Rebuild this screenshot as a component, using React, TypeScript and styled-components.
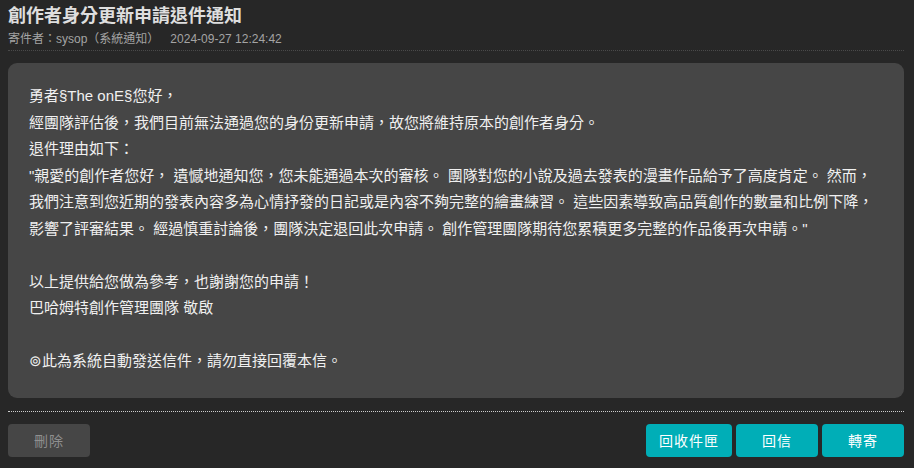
import React from "react";
import styled, { createGlobalStyle } from "styled-components";

const Global = createGlobalStyle`
  html, body { margin: 0; padding: 0; background: #272727; }
  body {
    font-family: "Liberation Sans", Arial, "Noto Sans CJK TC", sans-serif;
    color: #e8e8e8;
  }
`;

const Page = styled.div`
  width: 914px;
  min-height: 468px;
  box-sizing: border-box;
  padding: 5px 10px 10px 8px;
  display: flex;
  flex-direction: column;
`;

const Title = styled.h1`
  margin: 0;
  font-size: 18px;
  line-height: 22px;
  font-weight: bold;
  color: #dedede;
`;

const Meta = styled.div`
  margin-top: 4px;
  font-size: 12px;
  line-height: 16px;
  color: #a4a4a4;
  display: flex;
  gap: 11px;
`;

const Divider = styled.hr<{ $strong?: boolean }>`
  margin: 0;
  border: none;
  border-top: 1px dotted ${(p) => (p.$strong ? "#cfcfcf" : "#4a4a4a")};
  height: 0;
`;

const TopDivider = styled(Divider)`
  margin-top: 3px;
`;

const Card = styled.div`
  margin-top: 12px;
  background: #464646;
  border-radius: 9px;
  padding: 20px 21px 23px 21px;
  font-size: 15px;
  line-height: 26.5px;
  color: #f0f0f0;
`;

const Line = styled.div`
  min-height: 26.5px;
`;

const BottomDivider = styled(Divider)`
  margin-top: 13px;
`;

const Actions = styled.div`
  margin-top: 12px;
  display: flex;
  align-items: center;
  gap: 4px;
`;

const Spacer = styled.div`
  flex: 1;
`;

const Button = styled.button<{ $variant?: "muted" | "primary"; $w: number }>`
  width: ${(p) => p.$w}px;
  height: 33px;
  border: none;
  border-radius: 4px;
  font-family: inherit;
  font-size: 14px;
  cursor: pointer;
  background: ${(p) => (p.$variant === "muted" ? "#464646" : "#00aeb7")};
  color: ${(p) => (p.$variant === "muted" ? "#8f8f8f" : "#ffffff")};
  letter-spacing: 1px;
`;

export default function App() {
  return (
    <>
      <Global />
      <Page>
        <Title>創作者身分更新申請退件通知</Title>
        <Meta>
          <span>寄件者：sysop（系統通知）</span>
          <span>2024-09-27 12:24:42</span>
        </Meta>
        <TopDivider />
        <Card>
          <Line>勇者§The onE§您好，</Line>
          <Line>經團隊評估後，我們目前無法通過您的身份更新申請，故您將維持原本的創作者身分。</Line>
          <Line>退件理由如下：</Line>
          <Line>
            "親愛的創作者您好， 遺憾地通知您，您未能通過本次的審核。 團隊對您的小說及過去發表的漫畫作品給予了高度肯定。 然而，我們注意到您近期的發表內容多為心情抒發的日記或是內容不夠完整的繪畫練習。 這些因素導致高品質創作的數量和比例下降，影響了評審結果。 經過慎重討論後，團隊決定退回此次申請。 創作管理團隊期待您累積更多完整的作品後再次申請。"
          </Line>
          <Line />
          <Line>以上提供給您做為參考，也謝謝您的申請！</Line>
          <Line>巴哈姆特創作管理團隊 敬啟</Line>
          <Line />
          <Line>⊚此為系統自動發送信件，請勿直接回覆本信。</Line>
        </Card>
        <BottomDivider $strong />
        <Actions>
          <Button $variant="muted" $w={82}>刪除</Button>
          <Spacer />
          <Button $w={86}>回收件匣</Button>
          <Button $w={82}>回信</Button>
          <Button $w={82}>轉寄</Button>
        </Actions>
      </Page>
    </>
  );
}
